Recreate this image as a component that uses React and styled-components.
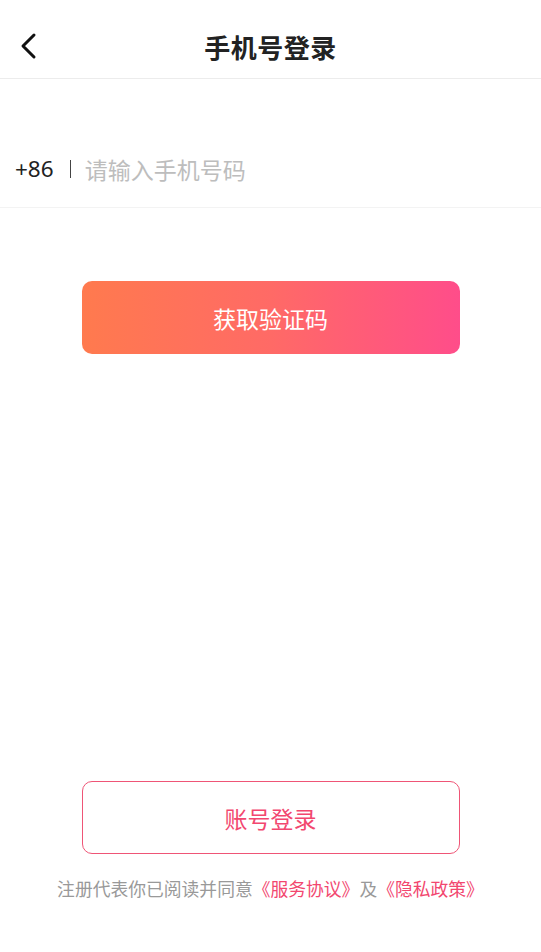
import styled, { createGlobalStyle } from "styled-components";

const GlobalStyle = createGlobalStyle`
  html, body {
    margin: 0;
    padding: 0;
    background: #fff;
  }
  body {
    font-family: "Noto Sans CJK SC", "Noto Sans", sans-serif;
  }
`;

const Page = styled.div`
  display: flex;
  flex-direction: column;
  min-height: 100vh;
  box-sizing: border-box;
  padding-bottom: 52px;
`;

const Header = styled.div`
  position: relative;
  height: 78px;
  display: flex;
  align-items: center;
  justify-content: center;
  border-bottom: 1px solid #ececec;
`;

const Back = styled.button`
  position: absolute;
  left: 14px;
  top: 28px;
  width: 28px;
  height: 36px;
  padding: 0;
  border: 0;
  background: none;
  display: flex;
  align-items: center;
  justify-content: center;
`;

const Title = styled.h1`
  margin: 0;
  padding-top: 14px;
  font-size: 26px;
  font-weight: 700;
  color: #222;
  letter-spacing: 0.5px;
`;

const PhoneRow = styled.div`
  margin-top: 51px;
  height: 77px;
  display: flex;
  align-items: center;
  padding-left: 15px;
  border-bottom: 1px solid #f3f3f3;
`;

const Code = styled.span`
  font-family: "Noto Sans", "Noto Sans CJK SC", sans-serif;
  font-size: 22.5px;
  color: #222;
`;

const Divider = styled.span`
  width: 1px;
  height: 18px;
  background: #444;
  margin: 0 14px 0 16px;
`;

const Input = styled.input`
  flex: 1;
  border: 0;
  outline: none;
  padding: 0;
  font-family: "Noto Sans CJK SC", sans-serif;
  font-size: 23px;
  color: #222;
  background: transparent;
  &::placeholder {
    color: #bdbdbd;
  }
`;

const Button = styled.button`
  display: block;
  width: 378px;
  height: 73px;
  margin: ${(p) => p.$top || "0"} auto 0;
  border-radius: 10px;
  font-family: "Noto Sans CJK SC", sans-serif;
  font-size: 23px;
  cursor: pointer;
  box-sizing: border-box;
  ${(p) =>
    p.$outline
      ? `
    background: #fff;
    border: 1.5px solid #ef5576;
    color: #f2476f;
  `
      : `
    background: linear-gradient(90deg, #ff7a4e 0%, #ff6a66 50%, #ff4d8a 100%);
    border: 0;
    color: #fff;
  `}
`;

const Bottom = styled.div`
  margin-top: auto;
`;

const Terms = styled.p`
  margin: 22px 0 0;
  text-align: center;
  font-size: 17.8px;
  line-height: 24px;
  color: #999;
  white-space: nowrap;
`;

const Link = styled.span`
  color: #f2476f;
`;

export default function App() {
  return (
    <>
      <GlobalStyle />
      <Page>
        <Header>
          <Back aria-label="back">
            <svg width="20" height="28" viewBox="0 0 20 28">
              <path
                d="M16 3 L5 14 L16 25"
                fill="none"
                stroke="#111"
                strokeWidth="3"
                strokeLinecap="round"
                strokeLinejoin="round"
              />
            </svg>
          </Back>
          <Title>手机号登录</Title>
        </Header>
        <PhoneRow>
          <Code>+86</Code>
          <Divider />
          <Input placeholder="请输入手机号码" />
        </PhoneRow>
        <Button $top="73px">获取验证码</Button>
        <Bottom>
          <Button $outline>账号登录</Button>
          <Terms>
            注册代表你已阅读并同意<Link>《服务协议》</Link>及<Link>《隐私政策》</Link>
          </Terms>
        </Bottom>
      </Page>
    </>
  );
}
